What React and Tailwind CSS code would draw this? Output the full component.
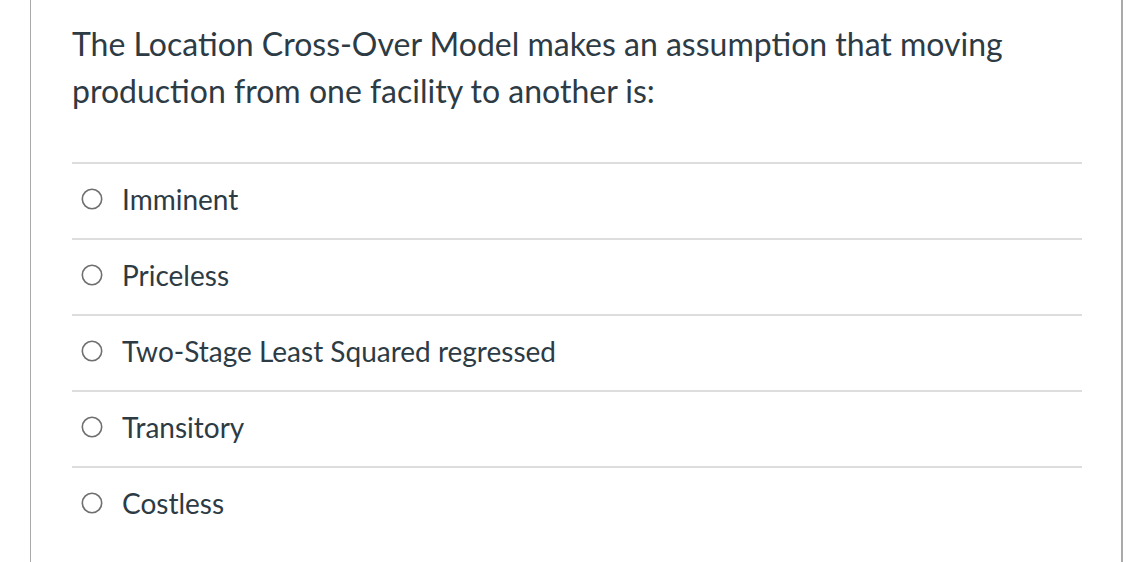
const options = [
  "Imminent",
  "Priceless",
  "Two-Stage Least Squared regressed",
  "Transitory",
  "Costless",
];

function Radio() {
  return (
    <svg width="22" height="22" viewBox="0 0 22 22" className="block shrink-0">
      <circle cx="11" cy="11" r="9.7" fill="white" stroke="#6f6f6f" strokeWidth="1.6" />
    </svg>
  );
}

export default function App() {
  return (
    <div className="h-[562px] w-[1148px] overflow-hidden bg-white pl-[30px] font-['Lato',sans-serif] text-[#2d3b45]">
      <div className="h-full w-[1093px] border-l border-r-2 border-[#aaaaaa] pl-[41px] pr-[39px] pt-[20px]">
        <p className="text-[32px] leading-[47px]">
          The Location Cross-Over Model makes an assumption that moving production from one facility to another is:
        </p>
        <div className="mt-[48px]">
          {options.map((opt) => (
            <label
              key={opt}
              className="flex h-[76px] items-center gap-[19px] border-t-2 border-[#dddddd] pb-[5px] pl-[9px]"
            >
              <Radio />
              <span className="text-[28px]">{opt}</span>
            </label>
          ))}
        </div>
      </div>
    </div>
  );
}
